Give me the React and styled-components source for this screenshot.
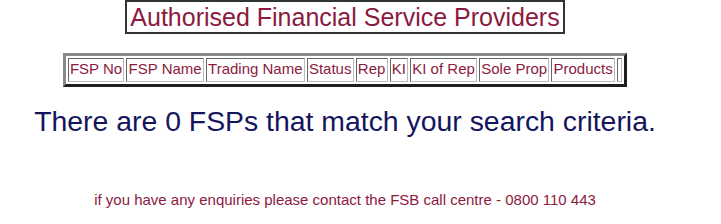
import React from "react";
import styled, { createGlobalStyle } from "styled-components";

const Global = createGlobalStyle`
  html, body { margin: 0; padding: 0; background: #fff; }
  body { font-family: "Liberation Sans", Arial, sans-serif; }
`;

const Page = styled.div`
  width: 690px;
  display: flex;
  flex-direction: column;
  align-items: center;
`;

const TitleBox = styled.h1`
  margin: 0;
  border: 2px solid #333;
  padding: 1px 3px 0;
  font-weight: normal;
  font-size: 25px;
  line-height: 29px;
  color: #8b1a3e;
`;

const Table = styled.table`
  margin-top: 19px;
  border-style: solid;
  border-width: 3px;
  border-color: #8a8a8a #1e1e1e #1e1e1e #8a8a8a;
  border-spacing: 2px;
  font-size: 15px;
`;

const Th = styled.td`
  border-style: solid;
  border-width: 1px;
  border-color: #666 #bbb #bbb #666;
  padding: 1px 1.2px 3px;
  color: #8b1a3e;
  line-height: 18px;
  white-space: nowrap;
  min-width: ${(p) => (p.$empty ? "1px" : "auto")};
`;

const Message = styled.p`
  margin: 18px 0 0;
  font-size: 28.4px;
  line-height: 33px;
  color: #15155e;
`;

const Footer = styled.p`
  margin: 53px 0 0;
  font-size: 15px;
  line-height: 17px;
  color: #8b1a3e;
`;

const columns = ["FSP No", "FSP Name", "Trading Name", "Status", "Rep", "KI", "KI of Rep", "Sole Prop", "Products"];

export default function App() {
  return (
    <>
      <Global />
      <Page>
        <TitleBox>Authorised Financial Service Providers</TitleBox>
        <Table>
          <tbody>
            <tr>
              {columns.map((c) => (
                <Th key={c}>{c}</Th>
              ))}
              <Th $empty />
            </tr>
          </tbody>
        </Table>
        <Message>There are 0 FSPs that match your search criteria.</Message>
        <Footer>if you have any enquiries please contact the FSB call centre - 0800 110 443</Footer>
      </Page>
    </>
  );
}
